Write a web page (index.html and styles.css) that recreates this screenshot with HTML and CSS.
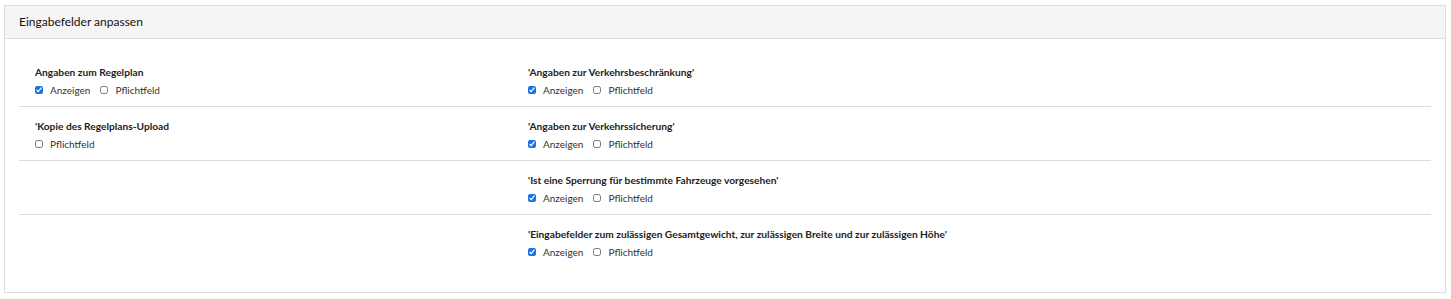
FILE: index.html
```html
<!DOCTYPE html>
<html lang="de">
<head>
    <meta charset="UTF-8">
    <title>Eingabefelder anpassen</title>
    <link rel="stylesheet" href="styles.css">
</head>
<body>

<div class="card">
    <div class="card-header">Eingabefelder anpassen</div>
    <div class="card-body">
        <div class="field-row">
            <div class="field">
                <div class="field-title">Angaben zum Regelplan</div>
                <div class="options">
                    <label><input type="checkbox" checked> Anzeigen</label>
                    <label><input type="checkbox"> Pflichtfeld</label>
                </div>
            </div>
            <div class="field">
                <div class="field-title">'Angaben zur Verkehrsbeschränkung'</div>
                <div class="options">
                    <label><input type="checkbox" checked> Anzeigen</label>
                    <label><input type="checkbox"> Pflichtfeld</label>
                </div>
            </div>
        </div>
        <div class="field-row">
            <div class="field">
                <div class="field-title">'Kopie des Regelplans-Upload</div>
                <div class="options">
                    <label><input type="checkbox"> Pflichtfeld</label>
                </div>
            </div>
            <div class="field">
                <div class="field-title">'Angaben zur Verkehrssicherung'</div>
                <div class="options">
                    <label><input type="checkbox" checked> Anzeigen</label>
                    <label><input type="checkbox"> Pflichtfeld</label>
                </div>
            </div>
        </div>
        <div class="field-row">
            <div class="field"></div>
            <div class="field">
                <div class="field-title">'Ist eine Sperrung für bestimmte Fahrzeuge vorgesehen'</div>
                <div class="options">
                    <label><input type="checkbox" checked> Anzeigen</label>
                    <label><input type="checkbox"> Pflichtfeld</label>
                </div>
            </div>
        </div>
        <div class="field-row">
            <div class="field"></div>
            <div class="field">
                <div class="field-title">'Eingabefelder zum zulässigen Gesamtgewicht, zur zulässigen Breite und zur zulässigen Höhe'</div>
                <div class="options">
                    <label><input type="checkbox" checked> Anzeigen</label>
                    <label><input type="checkbox"> Pflichtfeld</label>
                </div>
            </div>
        </div>
    </div>
</div>

</body>
</html>
```

FILE: styles.css
```css
body {
    font-family: "Lato", "Liberation Sans", sans-serif;
    background-color: #fff;
    color: #222;
    margin: 0;
    padding: 5px 5px 5px 4px;
}

.card {
    border: 1px solid #ddd;
    background-color: #fff;
}

.card-header {
    background-color: #f5f5f5;
    border-bottom: 1px solid #ddd;
    padding: 9px 14px;
    font-size: 12px;
    line-height: 14px;
    color: #111;
}

.card-body {
    padding: 14px 14px 24px 14px;
}

.field-row {
    display: grid;
    grid-template-columns: 493px 1fr;
    padding: 12px 16px 9px 16px;
    border-bottom: 1px solid #ddd;
}

.field-row:last-child {
    border-bottom: none;
}

.field-title {
    font-size: 10.2px;
    font-weight: 700;
    line-height: 14px;
    color: #222;
}

.options {
    display: flex;
    gap: 10px;
    margin-top: 4px;
    font-size: 10px;
    line-height: 14px;
    color: #333;
}

.options label {
    display: flex;
    align-items: center;
    gap: 7px;
}

.options input {
    width: 8px;
    height: 8px;
    margin: 0;
    accent-color: #1a73e8;
}
```
